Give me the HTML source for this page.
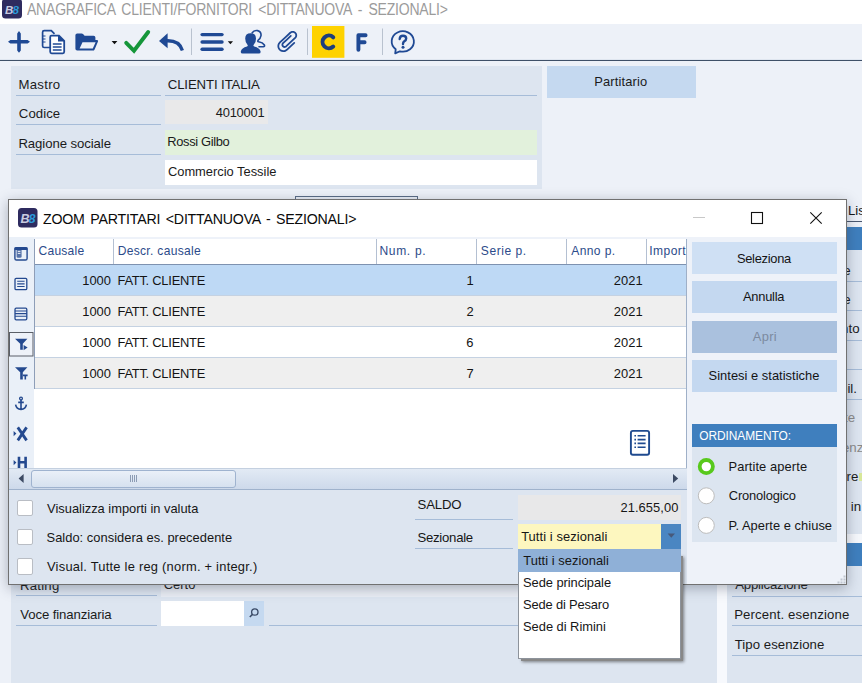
<!DOCTYPE html>
<html><head><meta charset="utf-8">
<style>
*{margin:0;padding:0;box-sizing:border-box}
html,body{width:862px;height:683px;overflow:hidden;position:relative;background:#edf1f8;font-family:"Liberation Sans",sans-serif}
.a{position:absolute}
.t{position:absolute;white-space:nowrap;line-height:1}
</style></head><body>
<div class="a" style="left:0px;top:0px;width:862px;height:24px;background:#ffffff;"></div>
<svg class="a" style="left:2px;top:0px" width="20" height="19" viewBox="0 0 20 19">
<rect x="0" y="-1.2" width="20" height="19.7" rx="3.5" fill="#2e2b5f"/>
<text x="3" y="14" font-family="Liberation Sans" font-size="11.5" font-style="italic" font-weight="bold" fill="#c9cbe0" letter-spacing="-0.8">B</text>
<text x="10.5" y="14" font-family="Liberation Sans" font-size="11.5" font-style="italic" font-weight="bold" fill="#2b9ad9">8</text>
</svg>
<div class="t" style="left:27.40px;top:1.82px;font-size:15.92px;color:#9b9b9b;letter-spacing:-0.247px;word-spacing:3px;transform:scaleX(0.88);transform-origin:0 0">ANAGRAFICA CLIENTI/FORNITORI &lt;DITTANUOVA - SEZIONALI&gt;</div>
<div class="a" style="left:0px;top:24px;width:862px;height:36px;background:#edf1f8;"></div>
<div class="a" style="left:0px;top:59px;width:862px;height:1px;background:#dfe6f0;"></div>
<div class="a" style="left:0px;top:60px;width:862px;height:1px;background:#3f5068;"></div>
<svg class="a" style="left:0;top:24px" width="430" height="36" viewBox="0 24 430 36">
<path d="M8 41.8 L10.4 40 H17.2 V33.4 L19 31 L20.8 33.4 V40 H27.6 L30 41.8 L27.6 43.6 H20.8 V50.4 L19 52.8 L17.2 50.4 V43.6 H10.4 Z" fill="#1f4994"/>
<path d="M50.5 47.5 H44.2 Q42.6 47.5 42.6 45.9 V32.2 Q42.6 30.6 44.2 30.6 H51.3 L54.5 33.8" fill="none" stroke="#1f4994" stroke-width="1.7"/>
<path d="M42.8 36 H45.5 M42.8 39 H45.5 M42.8 42 H45.5" stroke="#1f4994" stroke-width="1.2"/>
<path d="M51.5 35.6 Q50.2 35.6 50.2 37 V51.8 Q50.2 53.3 51.6 53.3 H62.8 Q64.2 53.3 64.2 51.8 V40.8 L59 35.6 Z" fill="#fff" stroke="#1f4994" stroke-width="1.8"/>
<path d="M58.6 35.8 V41 H64" fill="#1f4994" stroke="#1f4994" stroke-width="1.2"/>
<path d="M52.8 44 H61.6 M52.8 47 H61.6 M52.8 50 H61.6" stroke="#1f4994" stroke-width="1.5"/>
<path d="M75.4 35.2 Q75.4 33.4 77.2 33.4 H81.6 Q82.6 33.4 83.3 34.2 L84.6 35.7 H93.6 Q95.4 35.7 95.4 37.5 V40.1 H97 Q98.6 40.1 98 41.6 L94.6 49.4 Q94.1 50.6 92.8 50.6 H77.2 Q75.4 50.6 75.4 48.8 Z" fill="#1f4994"/>
<path d="M79.6 48.4 L82.5 42.3 H95.6 L92.8 48.4 Z" fill="#edf1f8"/>
<path d="M111.6 41 H117.4 L114.5 44.2 Z" fill="#111"/>
<path d="M126.2 42.8 L134 50.8 L148.2 32" fill="none" stroke="#15963a" stroke-width="3.9" stroke-linecap="round" stroke-linejoin="miter"/>
<path d="M159 40.9 L167.6 33.3 V48.3 Z" fill="#1f4994"/>
<path d="M166.5 40.8 Q179.2 40.2 182.4 50.4" fill="none" stroke="#1f4994" stroke-width="3.3" stroke-linecap="butt"/>
<rect x="191.0" y="28.5" width="1" height="26.5" fill="#b9c2cf"/>
<rect x="307.0" y="28.5" width="1" height="26.5" fill="#b9c2cf"/>
<rect x="382.0" y="28.5" width="1" height="26.5" fill="#b9c2cf"/>
<rect x="200.4" y="32.9" width="23.3" height="3.4" rx="1.7" fill="#1f4994"/>
<rect x="200.4" y="40.3" width="23.3" height="3.4" rx="1.7" fill="#1f4994"/>
<rect x="200.4" y="47.5" width="23.3" height="3.4" rx="1.7" fill="#1f4994"/>
<path d="M227.8 41.2 H233 L230.4 44.2 Z" fill="#111"/>
<path d="M252.2 32.8 Q254.2 30 257.6 30.6 Q261.4 31.5 261 35.6 Q260.5 38.5 258.2 40.2 Q257.2 41.4 258.6 41.8 Q262.8 42.6 264.4 45 Q265 46.6 263.2 46.8 H259" fill="none" stroke="#1f4994" stroke-width="1.6" stroke-linecap="round"/>
<path d="M245.2 38.6 Q245.2 33.2 250.6 33.2 Q256 33.2 256 38.6 Q256 42.8 253.6 45 Q253 46 254.2 46.6 Q259.8 48 260.6 51.6 Q260.8 53.6 258.8 53.6 H242.6 Q240.6 53.6 240.8 51.6 Q241.6 48 247 46.6 Q248.2 46 247.6 45 Q245.2 42.8 245.2 38.6Z" fill="#1f4994"/>
<path d="M294.25 42.87 L290.52 46.34 L286.80 49.82 L286.80 49.82 L285.72 50.59 L284.49 51.05 L283.18 51.18 L281.88 50.96 L280.68 50.41 L279.66 49.57 L278.89 48.50 L278.43 47.27 L278.31 45.96 L278.52 44.66 L279.07 43.46 L279.91 42.44 L279.91 42.44 L285.10 37.60 L290.29 32.75 L290.29 32.75 L291.04 32.22 L291.91 31.89 L292.83 31.80 L293.75 31.96 L294.59 32.34 L295.30 32.93 L295.84 33.68 L296.17 34.55 L296.26 35.47 L296.10 36.39 L295.72 37.23 L295.13 37.94 L295.13 37.94 L290.60 42.17 L286.07 46.40 L286.07 46.40 L285.60 46.73 L285.06 46.94 L284.49 46.99 L283.92 46.90 L283.40 46.66 L282.96 46.29 L282.62 45.83 L282.42 45.29 L282.37 44.72 L282.46 44.15 L282.70 43.63 L283.06 43.18 L283.06 43.18 L286.94 39.57 L290.81 35.96" fill="none" stroke="#1f4994" stroke-width="1.8" stroke-linecap="round" stroke-linejoin="round"/>
<rect x="312" y="26" width="32.4" height="31.8" fill="#fed200"/>
<path d="M333.2 37.3 A6.3 6.3 0 1 0 333.2 46.5" fill="none" stroke="#1d3e7c" stroke-width="4" stroke-linecap="round"/>
<path d="M358.4 49.8 V35.3 H365.6 M358.4 42.2 H364.6" fill="none" stroke="#1f4994" stroke-width="3.9" stroke-linecap="round" stroke-linejoin="round"/>
<path d="M399.9 51.3 A11.1 10.2 0 1 0 395.7 49.3 L395.2 53.4 Z" fill="none" stroke="#1f4994" stroke-width="1.8" stroke-linejoin="round"/>
<path d="M399.7 39 Q399.9 35.8 403 35.8 Q406.2 35.8 406.2 38.6 Q406.2 40.4 404.2 41.4 Q403 42 403 44" fill="none" stroke="#1f4994" stroke-width="2.4" stroke-linecap="round"/>
<circle cx="403" cy="47.2" r="1.5" fill="#1f4994"/>
</svg>
<div class="a" style="left:11px;top:66px;width:531px;height:123px;background:#dde5f0;"></div>
<div class="t" style="left:18.44px;top:78.08px;font-size:13.20px;color:#1b1b1b;letter-spacing:0.292px">Mastro</div>
<div class="a" style="left:16px;top:95px;width:145px;height:1px;background:#a6bcd8;"></div>
<div class="t" style="left:167.74px;top:78.08px;font-size:13.20px;color:#1b1b1b;letter-spacing:-0.110px">CLIENTI ITALIA</div>
<div class="a" style="left:165px;top:95px;width:372px;height:1px;background:#a6bcd8;"></div>
<div class="t" style="left:18.84px;top:106.88px;font-size:13.20px;color:#1b1b1b;letter-spacing:0.063px">Codice</div>
<div class="a" style="left:16px;top:124px;width:145px;height:1px;background:#a6bcd8;"></div>
<div class="a" style="left:165px;top:100px;width:103px;height:24px;background:#e9e9ea;"></div>
<div class="t" style="left:215.74px;top:106.53px;font-size:12.90px;color:#1b1b1b;letter-spacing:-0.211px">4010001</div>
<div class="t" style="left:18.44px;top:136.58px;font-size:13.20px;color:#1b1b1b;letter-spacing:-0.088px">Ragione sociale</div>
<div class="a" style="left:16px;top:154px;width:145px;height:1px;background:#a6bcd8;"></div>
<div class="a" style="left:165px;top:130px;width:372px;height:25px;background:#e2f1dc;"></div>
<div class="t" style="left:167.37px;top:136.13px;font-size:12.90px;color:#1b1b1b;letter-spacing:-0.359px">Rossi Gilbo</div>
<div class="a" style="left:165px;top:160px;width:372px;height:25px;background:#ffffff;"></div>
<div class="t" style="left:167.95px;top:166.44px;font-size:12.90px;color:#1b1b1b;letter-spacing:-0.011px">Commercio Tessile</div>
<div class="a" style="left:547px;top:66px;width:149px;height:32px;background:#c5d9f0;"></div>
<div class="t" style="left:594.27px;top:76.44px;font-size:12.90px;color:#1b1b1b;letter-spacing:0.149px">Partitario</div>
<div class="a" style="left:295px;top:196px;width:123px;height:6px;border:1px solid #5b6c86;border-bottom:none;background:#e9eef6"></div>
<div class="t" style="left:847.94px;top:204.28px;font-size:13.20px;color:#161616">Listino</div>
<div class="a" style="left:830px;top:221px;width:32px;height:1px;background:#4a5870;"></div>
<div class="a" style="left:830px;top:227px;width:32px;height:23px;background:#3f7fbe;"></div>
<div class="a" style="left:820px;top:250px;width:42px;height:320px;background:#dde5f0;"></div>
<div class="a" style="left:820px;top:281px;width:42px;height:1px;background:#a6bcd8;"></div>
<div class="a" style="left:820px;top:310px;width:42px;height:1px;background:#a6bcd8;"></div>
<div class="a" style="left:820px;top:340px;width:42px;height:1px;background:#a6bcd8;"></div>
<div class="a" style="left:820px;top:369px;width:42px;height:1px;background:#a6bcd8;"></div>
<div class="a" style="left:820px;top:399px;width:42px;height:1px;background:#a6bcd8;"></div>
<div class="t" style="left:815.07px;top:263.69px;font-size:13.30px;color:#1b1b1b">Nome</div>
<div class="t" style="left:815.07px;top:292.69px;font-size:13.30px;color:#1b1b1b">Nome</div>
<div class="t" style="left:824.06px;top:322.19px;font-size:13.30px;color:#1b1b1b">Conto</div>
<div class="t" style="left:804.86px;top:381.68px;font-size:13.20px;color:#1b1b1b">Contabil.</div>
<div class="t" style="left:806.98px;top:410.50px;font-size:13.30px;color:#8a8a8a">Aliquote</div>
<div class="t" style="left:826.46px;top:440.59px;font-size:13.30px;color:#8a8a8a">Esenzione</div>
<div class="t" style="left:818.43px;top:469.59px;font-size:13.30px;color:#1b1b1b">Centre</div>
<div class="a" style="left:859px;top:473px;width:3px;height:8px;background:#d8e89a;"></div>
<div class="t" style="left:850.64px;top:500.19px;font-size:13.30px;color:#1b1b1b;letter-spacing:0.226px">in</div>
<div class="a" style="left:820px;top:534px;width:42px;height:9px;background:#f6f8fc;"></div>
<div class="a" style="left:820px;top:543px;width:42px;height:23px;background:#3f7fbe;"></div>
<div class="a" style="left:11px;top:570px;width:706px;height:113px;background:#dde5f0;"></div>
<div class="a" style="left:717px;top:570px;width:10px;height:113px;background:#f7f9fd;"></div>
<div class="a" style="left:727px;top:570px;width:135px;height:113px;background:#dde5f0;"></div>
<div class="t" style="left:19.94px;top:578.68px;font-size:13.20px;color:#1b1b1b;letter-spacing:0.241px">Rating</div>
<div class="a" style="left:16px;top:595px;width:141px;height:1px;background:#a6bcd8;"></div>
<div class="a" style="left:161px;top:570px;width:380px;height:27px;background:#e9edf4;"></div>
<div class="t" style="left:163.75px;top:578.53px;font-size:12.90px;color:#1b1b1b;letter-spacing:0.008px">Certo</div>
<div class="t" style="left:20.30px;top:608.38px;font-size:13.20px;color:#1b1b1b;letter-spacing:-0.116px">Voce finanziaria</div>
<div class="a" style="left:16px;top:625px;width:141px;height:1px;background:#a6bcd8;"></div>
<div class="a" style="left:161px;top:601px;width:83px;height:25px;background:#ffffff;"></div>
<div class="a" style="left:244px;top:601px;width:20px;height:25px;background:#c5d9f0;"></div>
<svg class="a" style="left:247px;top:606px" width="14" height="14" viewBox="0 0 14 14"><circle cx="7.8" cy="6" r="3.2" fill="none" stroke="#3a4a66" stroke-width="1.3"/><path d="M5.6 8.2 L2.8 11" stroke="#3a4a66" stroke-width="1.6"/></svg>
<div class="a" style="left:269px;top:625px;width:300px;height:1px;background:#a6bcd8;"></div>
<div class="t" style="left:735.20px;top:578.28px;font-size:13.20px;color:#1b1b1b;letter-spacing:-0.201px">Applicazione</div>
<div class="a" style="left:732px;top:596px;width:130px;height:1px;background:#a6bcd8;"></div>
<div class="t" style="left:734.14px;top:607.98px;font-size:13.20px;color:#1b1b1b;letter-spacing:0.129px">Percent. esenzione</div>
<div class="a" style="left:732px;top:625px;width:130px;height:1px;background:#a6bcd8;"></div>
<div class="t" style="left:734.74px;top:637.58px;font-size:13.20px;color:#1b1b1b;letter-spacing:0.044px">Tipo esenzione</div>
<div class="a" style="left:732px;top:655px;width:130px;height:1px;background:#a6bcd8;"></div>
<div class="a" style="left:8px;top:199px;width:839px;height:386px;border:1px solid #717171;background:#fff;box-shadow:0 3px 12px rgba(40,50,70,.35)"></div>
<svg class="a" style="left:18px;top:208px" width="20" height="20" viewBox="0 0 20 20">
<rect x="0" y="0" width="19.5" height="19.5" rx="3.5" fill="#2e2b5f"/>
<text x="2.4" y="14.8" font-family="Liberation Sans" font-size="12.5" font-style="italic" font-weight="bold" fill="#c9cbe0">B</text>
<text x="10.4" y="14.8" font-family="Liberation Sans" font-size="12.5" font-style="italic" font-weight="bold" fill="#2b9ad9">8</text>
</svg>
<div class="t" style="left:42.57px;top:211.30px;font-size:15.41px;color:#0a0a0a;letter-spacing:-0.215px;word-spacing:2px;transform:scaleX(0.92);transform-origin:0 0">ZOOM PARTITARI &lt;DITTANUOVA - SEZIONALI&gt;</div>
<svg class="a" style="left:690px;top:205px" width="140" height="26" viewBox="690 205 140 26"><rect x="693" y="217" width="12" height="1" fill="#c8c8c8"/><rect x="751.5" y="212.5" width="11" height="11" fill="none" stroke="#111" stroke-width="1.1"/><path d="M810.3 212.3 L821.7 223.7 M821.7 212.3 L810.3 223.7" stroke="#111" stroke-width="1.1"/></svg>
<div class="a" style="left:9px;top:237px;width:678px;height:2px;background:#eef2f9;"></div>
<div class="a" style="left:9px;top:237px;width:25px;height:231px;background:#eaf0f8;"></div>
<div class="a" style="left:34px;top:239px;width:652px;height:229px;background:#ffffff;"></div>
<div class="a" style="left:34px;top:239px;width:1px;height:150px;background:#8e9eb8;"></div>
<div class="a" style="left:35px;top:264px;width:651px;height:1px;background:#7e92b0;"></div>
<div class="a" style="left:113px;top:239px;width:1px;height:25px;background:#b4c0d2;"></div>
<div class="a" style="left:376px;top:239px;width:1px;height:25px;background:#b4c0d2;"></div>
<div class="a" style="left:476px;top:239px;width:1px;height:25px;background:#b4c0d2;"></div>
<div class="a" style="left:566px;top:239px;width:1px;height:25px;background:#b4c0d2;"></div>
<div class="a" style="left:646px;top:239px;width:1px;height:25px;background:#b4c0d2;"></div>
<div class="t" style="left:38.60px;top:244.85px;font-size:12.06px;color:#2c4b8a;letter-spacing:0.223px">Causale</div>
<div class="t" style="left:117.63px;top:244.85px;font-size:12.06px;color:#2c4b8a;letter-spacing:0.318px">Descr. causale</div>
<div class="t" style="left:379.43px;top:244.85px;font-size:12.06px;color:#2c4b8a;letter-spacing:0.665px">Num. p.</div>
<div class="t" style="left:480.86px;top:244.85px;font-size:12.06px;color:#2c4b8a;letter-spacing:0.547px">Serie p.</div>
<div class="t" style="left:571.20px;top:244.85px;font-size:12.06px;color:#2c4b8a;letter-spacing:0.412px">Anno p.</div>
<div class="t" style="left:649.21px;top:244.85px;font-size:12.06px;color:#2c4b8a;letter-spacing:0.450px">Importo</div>
<div class="a" style="left:35px;top:265px;width:651px;height:30px;background:#bed9f5;"></div>
<div class="a" style="left:35px;top:295px;width:651px;height:1px;background:#c5d2e2;"></div>
<div class="t" style="left:82.33px;top:274.74px;font-size:12.90px;color:#141414;letter-spacing:-0.055px">1000</div>
<div class="t" style="left:117.47px;top:274.74px;font-size:12.90px;color:#141414;letter-spacing:-0.243px">FATT. CLIENTE</div>
<div class="t" style="left:466.40px;top:274.70px;font-size:12.94px;color:#141414">1</div>
<div class="t" style="left:613.82px;top:274.70px;font-size:12.94px;color:#141414">2021</div>
<div class="a" style="left:35px;top:296px;width:651px;height:30px;background:#efefef;"></div>
<div class="a" style="left:35px;top:326px;width:651px;height:1px;background:#c5d2e2;"></div>
<div class="t" style="left:82.33px;top:305.74px;font-size:12.90px;color:#141414;letter-spacing:-0.055px">1000</div>
<div class="t" style="left:117.47px;top:305.74px;font-size:12.90px;color:#141414;letter-spacing:-0.243px">FATT. CLIENTE</div>
<div class="t" style="left:466.40px;top:305.70px;font-size:12.94px;color:#141414">2</div>
<div class="t" style="left:613.82px;top:305.70px;font-size:12.94px;color:#141414">2021</div>
<div class="a" style="left:35px;top:327px;width:651px;height:30px;background:#ffffff;"></div>
<div class="a" style="left:35px;top:357px;width:651px;height:1px;background:#c5d2e2;"></div>
<div class="t" style="left:82.33px;top:336.74px;font-size:12.90px;color:#141414;letter-spacing:-0.055px">1000</div>
<div class="t" style="left:117.47px;top:336.74px;font-size:12.90px;color:#141414;letter-spacing:-0.243px">FATT. CLIENTE</div>
<div class="t" style="left:466.34px;top:336.70px;font-size:12.94px;color:#141414">6</div>
<div class="t" style="left:613.82px;top:336.70px;font-size:12.94px;color:#141414">2021</div>
<div class="a" style="left:35px;top:358px;width:651px;height:30px;background:#efefef;"></div>
<div class="a" style="left:35px;top:388px;width:651px;height:1px;background:#c5d2e2;"></div>
<div class="t" style="left:82.33px;top:367.74px;font-size:12.90px;color:#141414;letter-spacing:-0.055px">1000</div>
<div class="t" style="left:117.47px;top:367.74px;font-size:12.90px;color:#141414;letter-spacing:-0.243px">FATT. CLIENTE</div>
<div class="t" style="left:466.40px;top:367.70px;font-size:12.94px;color:#141414">7</div>
<div class="t" style="left:613.82px;top:367.70px;font-size:12.94px;color:#141414">2021</div>
<svg class="a" style="left:9px;top:239px" width="25" height="229" viewBox="9 239 25 229">
<rect x="14.9" y="247.7" width="12.2" height="12.3" rx="1.6" fill="none" stroke="#24498f" stroke-width="1.4"/>
<rect x="14.4" y="247.2" width="13.2" height="2.8" rx="1" fill="#24498f"/>
<path d="M16.6 249.5 H21.6 V256.4 Q21.6 257.8 20.2 257.8 H18 Q16.6 257.8 16.6 256.4 Z" fill="#24498f" fill-opacity="0.75"/>
<path d="M17.8 251.4 H20.4 M17.8 253.4 H20.4" stroke="#ffffff" stroke-width="0.9"/>
<rect x="15" y="278.3" width="11.8" height="11.4" rx="1.2" fill="none" stroke="#24498f" stroke-width="1.3"/>
<path d="M17.2 281.3 h7.4 M17.2 283.9 h7.4 M17.2 286.5 h7.4" stroke="#24498f" stroke-width="1.1"/>
<rect x="15" y="308.2" width="11.8" height="11.6" rx="1.2" fill="none" stroke="#24498f" stroke-width="1.3"/>
<path d="M15 311 h11.8 M15 313.6 h11.8 M15 316.2 h11.8" stroke="#24498f" stroke-width="1.1"/>
<rect x="9.5" y="332.5" width="23.5" height="23.5" fill="#eef2f9" stroke="#5a5f68" stroke-width="1"/>
<path d="M15 338.8 H27.4 L22.8 343.8 V349.8 H20.2 V343.8 Z" fill="#24498f"/>
<path d="M23.6 345 L27.6 347.6 L23.6 350.2Z" fill="#24498f"/>
<path d="M15 367.2 H27.4 L22.8 372.2 V379.4 H20.2 V372.2 Z" fill="#24498f"/>
<path d="M23 374.6 h4.6 v1.6 h-1.5 v3.2 h-1.6 v-3.2 h-1.5Z" fill="#24498f"/>
<circle cx="21" cy="398.6" r="1.4" fill="none" stroke="#24498f" stroke-width="1.3"/>
<path d="M21 400 V409 M18.2 402.4 H23.8 M15.6 404.6 Q16.4 409.2 21 409.4 Q25.6 409.2 26.4 404.6" fill="none" stroke="#24498f" stroke-width="1.6"/>
<path d="M13.6 431 L16.4 433.6 L13.6 436.2Z" fill="#24498f"/>
<path d="M17.8 427.4 L26.6 440.4 M26.6 427.4 L17.8 440.4" stroke="#24498f" stroke-width="2.8"/>
<path d="M13.6 460 L16.4 462.6 L13.6 465.2Z" fill="#24498f"/>
<path d="M19 456.8 V468 M25.6 456.8 V468 M19 462.2 H25.6" stroke="#24498f" stroke-width="2.6"/>
</svg>
<svg class="a" style="left:629px;top:429px" width="23" height="28" viewBox="629 429 23 28"><rect x="630.9" y="430.9" width="18.2" height="23.8" rx="2" fill="none" stroke="#1f4a8f" stroke-width="1.9"/><path d="M634.4 435.8 h1.6 M634.4 439.6 h1.6 M634.4 443.4 h1.6 M634.4 447.2 h1.6" stroke="#1f4a8f" stroke-width="1.6"/><path d="M637.6 435.8 h8 M637.6 439.6 h8 M637.6 443.4 h8 M637.6 447.2 h8" stroke="#1f4a8f" stroke-width="1.6"/></svg>
<div class="a" style="left:9px;top:468px;width:678px;height:22px;background:linear-gradient(#e2eaf4,#cdd9ea);border-top:1px solid #c4d0e0;border-bottom:1px solid #9fb2cc"></div>
<div class="a" style="left:31px;top:470px;width:205px;height:18px;border:1px solid #9fb3cf;border-radius:3px;background:linear-gradient(#eaf0f8,#d6e1ef)"></div>
<svg class="a" style="left:9px;top:468px" width="678" height="22" viewBox="9 468 678 22"><path d="M23.6 474 V483 L18.6 478.5Z" fill="#3c4a63"/><path d="M673 474 V483 L678.2 478.5Z" fill="#3c4a63"/><path d="M130.5 475 V482 M132.5 475 V482 M134.5 475 V482 M136.5 475 V482" stroke="#8c9cb4" stroke-width="1"/></svg>
<div class="a" style="left:9px;top:490px;width:678px;height:94px;background:#dde5f0;"></div>
<div class="a" style="left:16.5px;top:499.5px;width:16.5px;height:16.5px;background:#fff;border:1px solid #b9bdc4;border-radius:2px"></div>
<div class="a" style="left:16.5px;top:528.8px;width:16.5px;height:16.5px;background:#fff;border:1px solid #b9bdc4;border-radius:2px"></div>
<div class="a" style="left:16.5px;top:558.3px;width:16.5px;height:16.5px;background:#fff;border:1px solid #b9bdc4;border-radius:2px"></div>
<div class="t" style="left:47.10px;top:502.64px;font-size:12.90px;color:#161616;letter-spacing:-0.015px">Visualizza importi in valuta</div>
<div class="t" style="left:46.52px;top:531.93px;font-size:12.90px;color:#161616;letter-spacing:0.023px">Saldo: considera es. precedente</div>
<div class="t" style="left:47.00px;top:560.83px;font-size:12.90px;color:#161616;letter-spacing:0.236px">Visual. Tutte le reg (norm. + integr.)</div>
<div class="t" style="left:417.51px;top:498.28px;font-size:13.20px;color:#161616;letter-spacing:-0.156px">SALDO</div>
<div class="a" style="left:415px;top:519px;width:98px;height:1px;background:#a6bcd8;"></div>
<div class="t" style="left:417.41px;top:531.28px;font-size:13.20px;color:#161616;letter-spacing:-0.267px">Sezionale</div>
<div class="a" style="left:415px;top:548px;width:98px;height:1px;background:#a6bcd8;"></div>
<div class="a" style="left:518px;top:495px;width:163px;height:25px;background:#e8e8e9;"></div>
<div class="t" style="left:620.46px;top:501.64px;font-size:12.90px;color:#161616;letter-spacing:0.078px">21.655,00</div>
<div class="a" style="left:518px;top:524px;width:143px;height:25px;background:#fdf7bf;"></div>
<div class="a" style="left:661px;top:524px;width:20px;height:25px;background:#4a86c2;"></div>
<svg class="a" style="left:661px;top:524px" width="20" height="25"><path d="M6.6 9.6 H14 L10.3 13.8Z" fill="#47597a"/></svg>
<div class="t" style="left:521.14px;top:530.83px;font-size:12.90px;color:#161616;letter-spacing:0.087px">Tutti i sezionali</div>
<div class="a" style="left:687px;top:237px;width:159px;height:347px;background:#eef2f9;"></div>
<div class="a" style="left:686px;top:239px;width:1px;height:229px;background:#9fb0c8;"></div>
<div class="a" style="left:692px;top:242px;width:145px;height:32px;background:#cfe0f4;"></div>
<div class="t" style="left:736.92px;top:252.53px;font-size:12.90px;color:#141414;letter-spacing:-0.291px">Seleziona</div>
<div class="a" style="left:692px;top:281px;width:145px;height:32px;background:#c4d8f0;"></div>
<div class="t" style="left:743.00px;top:291.34px;font-size:12.90px;color:#141414;letter-spacing:-0.264px">Annulla</div>
<div class="a" style="left:692px;top:321px;width:145px;height:32px;background:#aac1de;"></div>
<div class="t" style="left:752.80px;top:331.44px;font-size:12.90px;color:#7c8aa0;letter-spacing:0.309px">Apri</div>
<div class="a" style="left:692px;top:360px;width:145px;height:32px;background:#c4d8f0;"></div>
<div class="t" style="left:708.62px;top:370.44px;font-size:12.90px;color:#141414;letter-spacing:0.020px">Sintesi e statistiche</div>
<div class="a" style="left:692px;top:424px;width:145px;height:23px;background:#3f7fbe;"></div>
<div class="t" style="left:699.16px;top:431.17px;font-size:11.92px;color:#ffffff;letter-spacing:-0.037px">ORDINAMENTO:</div>
<div class="a" style="left:692px;top:447px;width:145px;height:95px;background:#dce5f0;"></div>
<svg class="a" style="left:692px;top:447px" width="30" height="95" viewBox="692 447 30 95"><circle cx="706.3" cy="466.6" r="6.6" fill="#fff" stroke="#58c91c" stroke-width="3.8"/><circle cx="706.3" cy="495.8" r="8" fill="#fff" stroke="#bdbdbd" stroke-width="1"/><circle cx="706.3" cy="525.4" r="8" fill="#fff" stroke="#bdbdbd" stroke-width="1"/></svg>
<div class="t" style="left:728.47px;top:461.14px;font-size:12.90px;color:#161616;letter-spacing:0.094px">Partite aperte</div>
<div class="t" style="left:728.86px;top:490.24px;font-size:12.90px;color:#161616;letter-spacing:-0.176px">Cronologico</div>
<div class="t" style="left:728.47px;top:520.33px;font-size:12.90px;color:#161616;letter-spacing:0.036px">P. Aperte e chiuse</div>
<svg class="a" style="left:836px;top:574px" width="10" height="10"><path d="M7.5 1.5h2v2h-2z M7.5 4.5h2v2h-2z M4.5 4.5h2v2h-2z M7.5 7.5h2v2h-2z M4.5 7.5h2v2h-2z M1.5 7.5h2v2h-2z" fill="#c0c6d0"/></svg>
<div class="a" style="left:521px;top:556px;width:162px;height:105px;box-shadow:1px 1px 3px rgba(0,0,0,.45);background:#888"></div>
<div class="a" style="left:518px;top:549px;width:163px;height:110px;background:#fff;border:1px solid #8d939b;border-top:none"></div>
<div class="a" style="left:518px;top:549px;width:163px;height:23px;background:#8fb0d7;"></div>
<div class="t" style="left:523.34px;top:555.43px;font-size:12.90px;color:#161616;letter-spacing:0.049px">Tutti i sezionali</div>
<div class="t" style="left:523.02px;top:577.33px;font-size:12.90px;color:#161616;letter-spacing:-0.058px">Sede principale</div>
<div class="t" style="left:523.02px;top:599.24px;font-size:12.90px;color:#161616;letter-spacing:-0.161px">Sede di Pesaro</div>
<div class="t" style="left:523.02px;top:621.24px;font-size:12.90px;color:#161616;letter-spacing:-0.025px">Sede di Rimini</div>
</body></html>
